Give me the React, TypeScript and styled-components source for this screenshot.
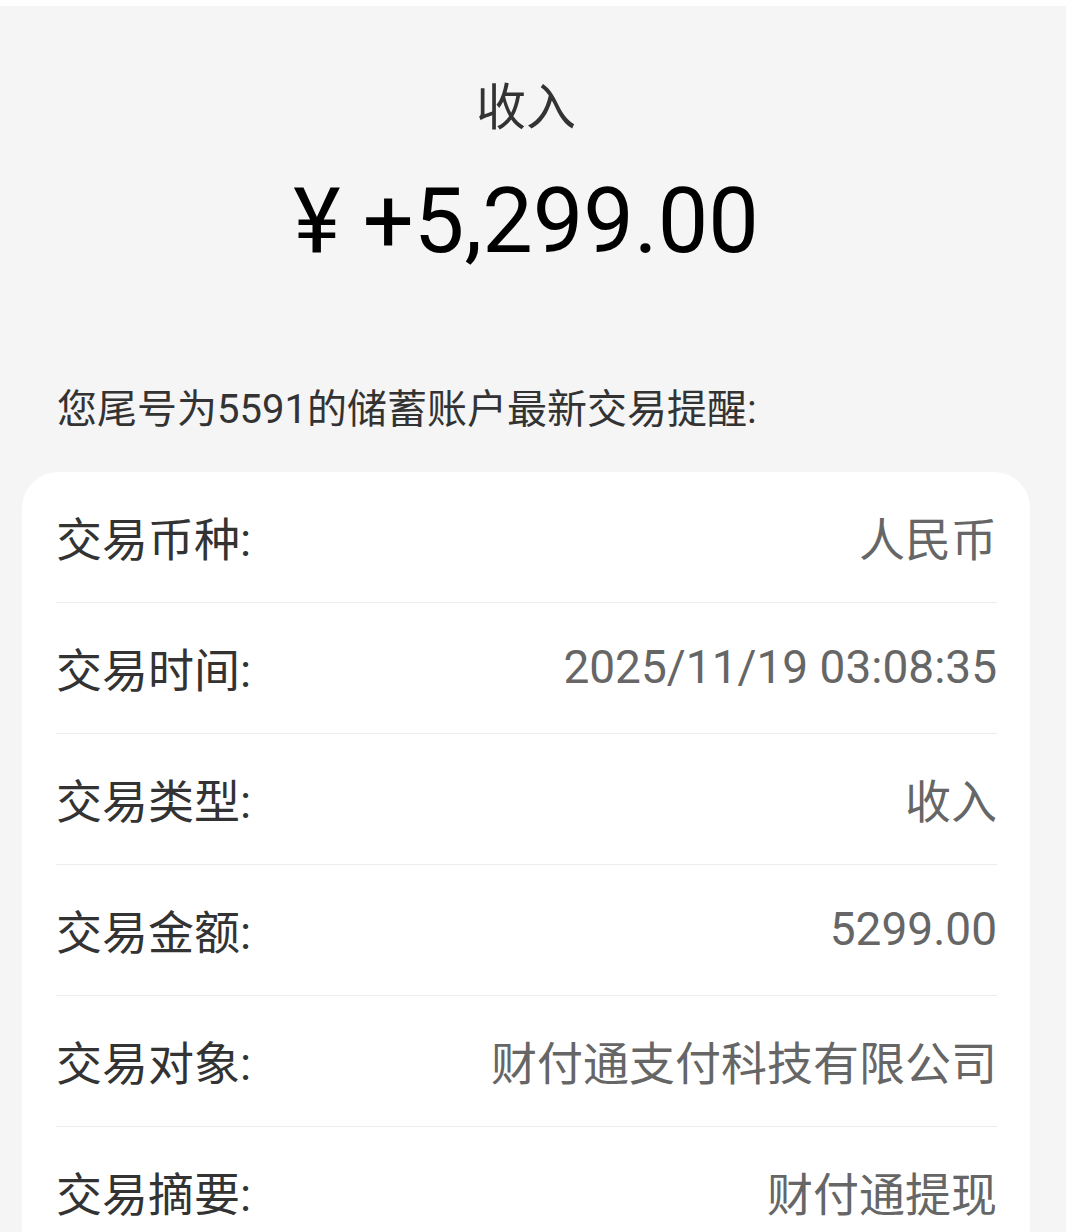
import React from 'react';
import { createGlobalStyle, styled } from 'styled-components';

const GlobalStyle = createGlobalStyle`
  html, body {
    margin: 0;
    padding: 0;
    background: #ffffff;
  }
  body {
    font-family: Roboto, "Noto Sans CJK SC", "Noto Sans", sans-serif;
    -webkit-font-smoothing: antialiased;
  }
`;

const Page = styled.div`
  margin-top: 6px;
  min-height: 1226px;
  background-color: #f5f5f5;
  display: flex;
  flex-direction: column;
  overflow: hidden;
`;

const Header = styled.div`
  display: flex;
  flex-direction: column;
  align-items: center;
  padding: 77px 14px 0 0;
`;

const Title = styled.div`
  font-size: 50px;
  line-height: 50px;
  color: #333333;
`;

const Amount = styled.div`
  margin-top: 39px;
  font-size: 90px;
  line-height: 100px;
  color: #000000;
  white-space: nowrap;
`;

const Notice = styled.div`
  margin: 113px 0 37px 57px;
  font-size: 40px;
  line-height: 50px;
  color: #333333;
`;

const Card = styled.div`
  margin: 0 36px 0 22px;
  padding: 0 33px 0 34px;
  background-color: #ffffff;
  border-radius: 36px 36px 0 0;
  display: flex;
  flex-direction: column;
`;

const Row = styled.div<{ $last?: boolean }>`
  height: 130px;
  display: flex;
  align-items: center;
  justify-content: space-between;
  border-bottom: ${({ $last }) => ($last ? 'none' : '1px solid #ececec')};
`;

const Label = styled.span`
  font-size: 46px;
  color: #333333;
  margin-top: -3px;
`;

const Value = styled.span`
  font-size: 46px;
  color: #666666;
  margin-top: -3px;
`;

const details = [
  { label: '交易币种:', value: '人民币' },
  { label: '交易时间:', value: '2025/11/19 03:08:35' },
  { label: '交易类型:', value: '收入' },
  { label: '交易金额:', value: '5299.00' },
  { label: '交易对象:', value: '财付通支付科技有限公司' },
  { label: '交易摘要:', value: '财付通提现' },
];

const App = () => {
  return (
    <>
      <GlobalStyle />
      <Page>
        <Header>
          <Title>收入</Title>
          <Amount>¥ +5,299.00</Amount>
        </Header>
        <Notice>您尾号为5591的储蓄账户最新交易提醒:</Notice>
        <Card>
          {details.map((item, i) => (
            <Row key={item.label} $last={i === details.length - 1}>
              <Label>{item.label}</Label>
              <Value>{item.value}</Value>
            </Row>
          ))}
        </Card>
      </Page>
    </>
  );
};

export default App;
